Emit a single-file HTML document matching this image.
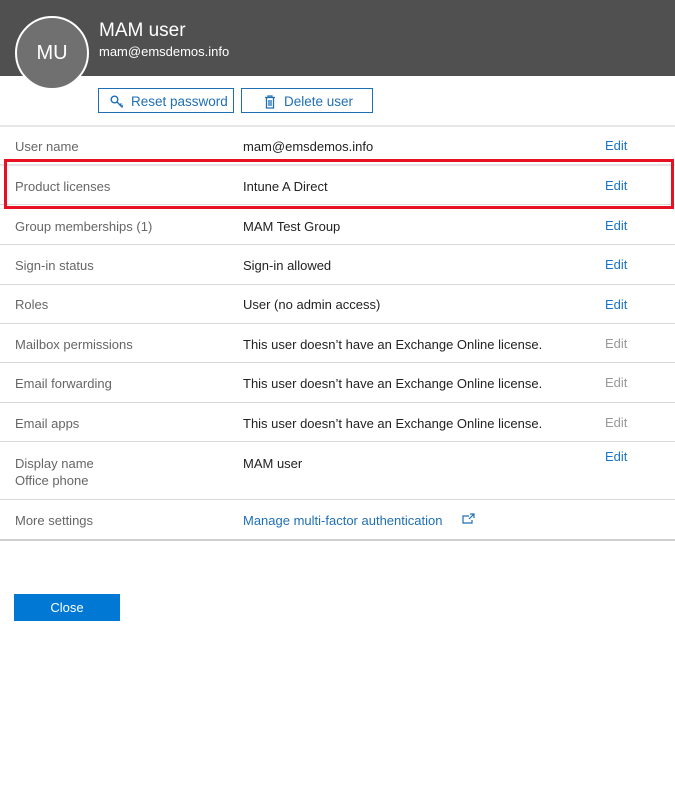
<!DOCTYPE html>
<html><head><meta charset="utf-8"><style>
body{margin:0;width:675px;height:812px;background:#fff;font-family:"Liberation Sans",sans-serif;position:relative;overflow:hidden}
.a{position:absolute;white-space:nowrap}
.hd{left:0;top:0;width:675px;height:76px;background:#505050}
.av{left:15px;top:16px;width:70px;height:70px;border-radius:50%;background:#707070;border:2px solid #fff;color:#fff;font-size:20px;text-align:center;line-height:70px}
.btn{border:1px solid #1f6fb4;height:25px;top:88px;color:#1f6fb4;font-size:13.5px;line-height:25px;box-sizing:border-box}
.ln{left:0;width:675px;height:1px;background:#d9d9d9}
.l{left:15px;color:#666;font-size:13px}
.v{left:243px;color:#222;font-size:13px}
.e{left:605px;color:#1a75c9;font-size:13px}
.g{color:#999}
</style></head><body>
<div class="a hd"></div>
<div class="a av">MU</div>
<div class="a" style="left:99px;top:20px;color:#fff;font-size:19px">MAM user</div>
<div class="a" style="left:99px;top:44px;color:#fff;font-size:13px">mam@emsdemos.info</div>
<div class="a btn" style="left:98px;width:136px"><svg style="position:absolute;left:11px;top:6px" width="14" height="14" viewBox="0 0 14 14" fill="none" stroke="#1f6fb4" stroke-width="1.4"><circle cx="4.5" cy="4.5" r="3.3"/><path d="M7 7l5.5 5.5M10 10l1.5-1.5M11.5 11.5l1.3-1.3"/></svg><span style="position:absolute;left:32px">Reset password</span></div>
<div class="a btn" style="left:241px;width:132px"><svg style="position:absolute;left:22px;top:6px" width="12" height="14" viewBox="0 0 12 14" fill="none" stroke="#1f6fb4" stroke-width="1.3"><path d="M1 2.5h10M4 2.5V1h4v1.5M2.5 2.5v10.5h7V2.5M5 5v6M7 5v6"/></svg><span style="position:absolute;left:42px">Delete user</span></div>
<div class="a ln" style="top:125px;height:2px;background:#e6e6e6"></div>
<div class="a l" style="top:139px">User name</div><div class="a v" style="top:139px">mam@emsdemos.info</div><div class="a e" style="top:138px">Edit</div>
<div class="a ln" style="top:164px;height:2px;background:#e6e6e6"></div>
<div class="a l" style="top:179px">Product licenses</div><div class="a v" style="top:179px">Intune A Direct</div><div class="a e" style="top:178px">Edit</div>
<div class="a ln" style="top:204px"></div>
<div class="a l" style="top:219px">Group memberships (1)</div><div class="a v" style="top:219px">MAM Test Group</div><div class="a e" style="top:218px">Edit</div>
<div class="a ln" style="top:244px"></div>
<div class="a l" style="top:258px">Sign-in status</div><div class="a v" style="top:258px">Sign-in allowed</div><div class="a e" style="top:257px">Edit</div>
<div class="a ln" style="top:284px"></div>
<div class="a l" style="top:297px">Roles</div><div class="a v" style="top:297px">User (no admin access)</div><div class="a e" style="top:297px">Edit</div>
<div class="a ln" style="top:323px"></div>
<div class="a l" style="top:337px">Mailbox permissions</div><div class="a v" style="top:337px">This user doesn’t have an Exchange Online license.</div><div class="a e g" style="top:336px">Edit</div>
<div class="a ln" style="top:362px"></div>
<div class="a l" style="top:376px">Email forwarding</div><div class="a v" style="top:376px">This user doesn’t have an Exchange Online license.</div><div class="a e g" style="top:375px">Edit</div>
<div class="a ln" style="top:402px"></div>
<div class="a l" style="top:416px">Email apps</div><div class="a v" style="top:416px">This user doesn’t have an Exchange Online license.</div><div class="a e g" style="top:415px">Edit</div>
<div class="a ln" style="top:441px"></div>
<div class="a l" style="top:456px">Display name</div><div class="a l" style="top:473px">Office phone</div><div class="a v" style="top:456px">MAM user</div><div class="a e" style="top:449px">Edit</div>
<div class="a ln" style="top:499px"></div>
<div class="a l" style="top:513px">More settings</div><div class="a" style="left:243px;top:513px;color:#1f6fb4;font-size:13px">Manage multi-factor authentication</div>
<svg class="a" style="left:462px;top:513px" width="13" height="12" viewBox="0 0 13 12" fill="none" stroke="#1f6fb4" stroke-width="1.2"><path d="M7 3H1v7h9V7M8 1h4v4M12 1L7 6"/></svg>
<div class="a ln" style="top:539px;height:2px;background:#d0d0d0"></div>
<div class="a" style="left:14px;top:594px;width:106px;height:27px;background:#0078d4;color:#fff;font-size:13px;text-align:center;line-height:27px">Close</div>
<div class="a" style="left:4px;top:159px;width:664px;height:44px;border:3px solid #e81123"></div>
</body></html>
